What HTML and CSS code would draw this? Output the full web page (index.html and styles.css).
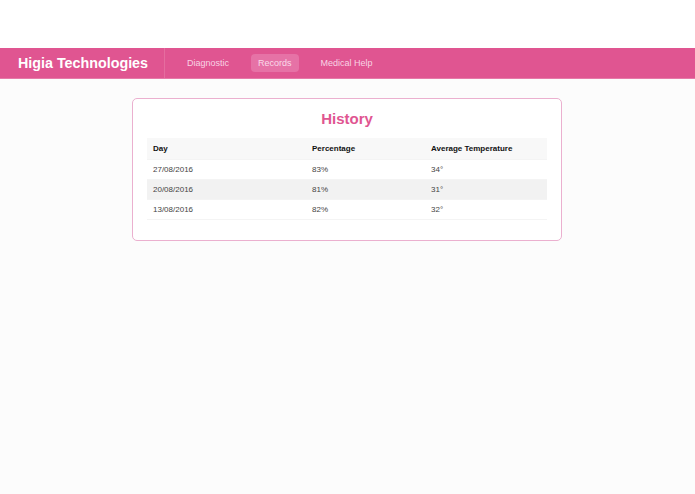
FILE: index.html
```html
<!DOCTYPE html>
<html>
<head>
<meta charset="utf-8">
<link rel="stylesheet" href="styles.css">
</head>
<body>
<div class="top"></div>
<nav class="navbar">
  <div class="brand">Higia Technologies</div>
  <ul class="links">
    <li><a>Diagnostic</a></li>
    <li><a class="active">Records</a></li>
    <li><a>Medical Help</a></li>
  </ul>
</nav>
<main class="content">
  <section class="card">
    <h1 class="title">History</h1>
    <table class="history">
      <thead>
        <tr><th class="c1">Day</th><th class="c2">Percentage</th><th>Average Temperature</th></tr>
      </thead>
      <tbody>
        <tr><td>27/08/2016</td><td>83%</td><td>34°</td></tr>
        <tr class="alt"><td>20/08/2016</td><td>81%</td><td>31°</td></tr>
        <tr><td>13/08/2016</td><td>82%</td><td>32°</td></tr>
      </tbody>
    </table>
  </section>
</main>
</body>
</html>
```

FILE: styles.css
```css
* { box-sizing: border-box; }
html, body { margin: 0; padding: 0; }
body {
  font-family: "Liberation Sans", Arial, sans-serif;
  background: #fcfcfc;
  height: 494px;
}
.top { height: 48px; background: #ffffff; }
.navbar {
  height: 31px;
  background: #e05591;
  border-bottom: 1px solid #e67aa8;
  display: flex;
  align-items: center;
}
.brand {
  color: #ffffff;
  font-weight: bold;
  font-size: 14.3px;
  padding: 0 16px 0 18px;
  height: 30px;
  line-height: 30px;
  border-right: 1px solid #e56d9f;
}
.links {
  list-style: none;
  margin: 0;
  padding: 0 0 0 15px;
  display: flex;
  align-items: center;
  gap: 15px;
}
.links a {
  display: block;
  color: #f9d3e4;
  font-size: 9px;
  padding: 4px 7px;
  line-height: 10px;
  border-radius: 4px;
}
.links a.active { background: #e672a6; color: #fadbe9; }
.content {
  padding-top: 19px;
  display: flex;
  justify-content: center;
}
.card {
  width: 430px;
  margin-left: -1px;
  border: 1px solid #ebb0cf;
  border-radius: 5px;
  background: #ffffff;
  padding: 10px 14px 20px;
}
.title {
  margin: 0 0 9px;
  text-align: center;
  color: #e05591;
  font-size: 15px;
  line-height: 20px;
  font-weight: bold;
}
.history {
  width: 100%;
  border-collapse: collapse;
  font-size: 8px;
  color: #444444;
}
.history th {
  text-align: left;
  font-weight: bold;
  color: #111;
  background: #f8f8f8;
  height: 21px;
  padding: 0 6px;
}
.history td {
  height: 20px;
  padding: 0 6px;
  border-top: 1px solid #f4f4f4;
}
.history .c1 { width: 159px; }
.history .c2 { width: 119px; }
.history tr.alt td { background: #f2f2f2; }
.history tbody tr:last-child td { border-bottom: 1px solid #f4f4f4; }
```
